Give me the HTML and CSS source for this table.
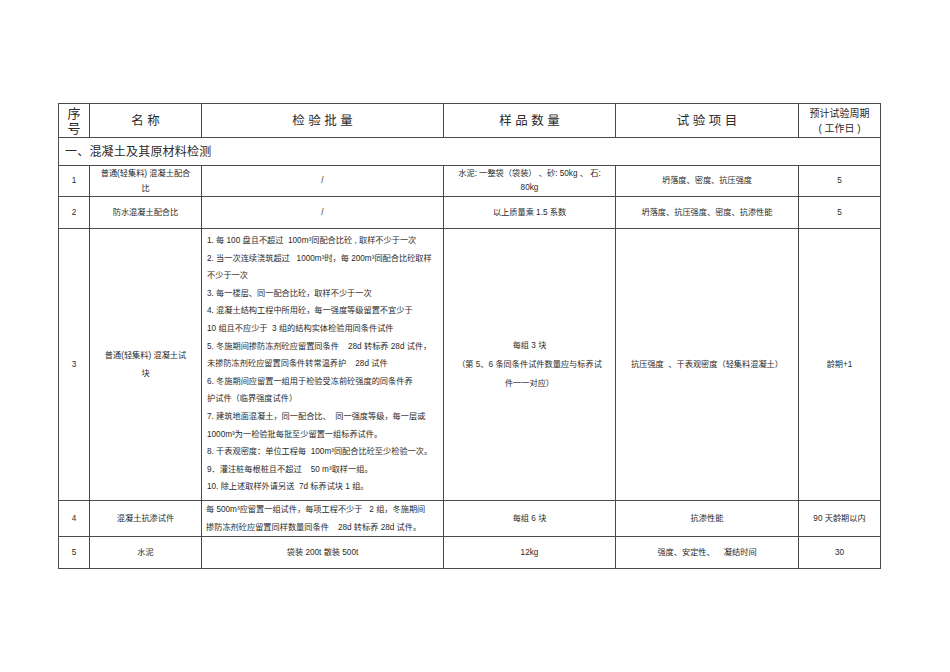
FILE: index.html
```html
<!DOCTYPE html>
<html lang="zh-CN">
<head>
<meta charset="utf-8">
<title>检验批量</title>
<link rel="stylesheet" href="styles.css">
</head>
<body>
<div class="page">
  <div class="grid">
    <div class="cell h-no"><div class="l16">序</div><div class="l16">号</div></div>
    <div class="cell h-big">名称</div>
    <div class="cell h-big">检验批量</div>
    <div class="cell h-big">样品数量</div>
    <div class="cell h-big">试验项目</div>
    <div class="cell h-small"><div class="l15">预计试验周期</div><div class="l15">( 工作日 )</div></div>

    <div class="cell sec">一、混凝土及其原材料检测</div>

    <div class="cell">1</div>
    <div class="cell"><div class="l15">普通(轻集料) 混凝土配合</div><div class="l15">比</div></div>
    <div class="cell">/</div>
    <div class="cell"><div class="l14">水泥: 一整袋（袋装） 、砂: 50kg 、 石:</div><div class="l14">80kg</div></div>
    <div class="cell">坍落度、密度、抗压强度</div>
    <div class="cell">5</div>

    <div class="cell">2</div>
    <div class="cell">防水混凝土配合比</div>
    <div class="cell">/</div>
    <div class="cell">以上质量乘 1.5 系数</div>
    <div class="cell">坍落度、抗压强度、密度、抗渗性能</div>
    <div class="cell">5</div>

    <div class="cell">3</div>
    <div class="cell"><div class="l18">普通(轻集料) 混凝土试</div><div class="l18">块</div></div>
    <div class="cell list">
      <div class="ln">1. 每 100 盘且不超过 &nbsp;100m³同配合比砼 , 取样不少于一次</div>
      <div class="ln">2. 当一次连续浇筑超过 &nbsp;&nbsp;1000m³时，每 200m³同配合比砼取样</div>
      <div class="ln">不少于一次</div>
      <div class="ln">3. 每一楼层、同一配合比砼，取样不少于一次</div>
      <div class="ln">4. 混凝土结构工程中所用砼，每一强度等级留置不宜少于</div>
      <div class="ln">10 组且不应少于 &nbsp;3 组的结构实体检验用同条件试件</div>
      <div class="ln">5. 冬施期间掺防冻剂砼应留置同条件 &nbsp;&nbsp;&nbsp;28d 转标养 28d 试件，</div>
      <div class="ln">未掺防冻剂砼应留置同条件转常温养护 &nbsp;&nbsp;&nbsp;28d 试件</div>
      <div class="ln">6. 冬施期间应留置一组用于检验受冻前砼强度的同条件养</div>
      <div class="ln">护试件（临界强度试件）</div>
      <div class="ln">7. 建筑地面混凝土，同一配合比、 &nbsp;同一强度等级，每一层或</div>
      <div class="ln">1000m³为一检验批每批至少留置一组标养试件。</div>
      <div class="ln">8. 干表观密度：单位工程每 &nbsp;100m³同配合比砼至少检验一次。</div>
      <div class="ln">9．灌注桩每根桩且不超过 &nbsp;&nbsp;&nbsp;50 m³取样一组。</div>
      <div class="ln">10. 除上述取样外请另送 &nbsp;7d 标养试块 1 组。</div>
    </div>
    <div class="cell"><div class="l19">每组 3 块</div><div class="l19">（第 5、6 条同条件试件数量应与标养试</div><div class="l19">件一一对应）</div></div>
    <div class="cell">抗压强度 &nbsp;、干表观密度（轻集料混凝土）</div>
    <div class="cell">龄期+1</div>

    <div class="cell">4</div>
    <div class="cell">混凝土抗渗试件</div>
    <div class="cell left"><div class="l18">每 500m³应留置一组试件，每项工程不少于 &nbsp;&nbsp;2 组，冬施期间</div><div class="l18">掺防冻剂砼应留置同样数量同条件 &nbsp;&nbsp;&nbsp;28d 转标养 28d 试件。</div></div>
    <div class="cell">每组 6 块</div>
    <div class="cell">抗渗性能</div>
    <div class="cell">90 天龄期以内</div>

    <div class="cell">5</div>
    <div class="cell">水泥</div>
    <div class="cell">袋装 200t 散装 500t</div>
    <div class="cell">12kg</div>
    <div class="cell">强度、安定性、 &nbsp;&nbsp;&nbsp;凝结时间</div>
    <div class="cell">30</div>
  </div>
</div>
</body>
</html>
```
FILE: styles.css
```css
html, body {
  margin: 0;
  padding: 0;
  background: #ffffff;
}
.page {
  padding: 103px 0 0 58px;
}
.grid {
  display: grid;
  grid-template-columns: 31px 112px 242px 172px 183px 82px;
  grid-template-rows: 34px 28px 31px 32px 272px 36px 32px;
  width: max-content;
  border-left: 1px solid #4a4a4a;
  border-top: 1px solid #4a4a4a;
  font-family: "Liberation Sans", "Noto Sans CJK SC", sans-serif;
  font-size: 8.2px;
  line-height: 12px;
  color: #2a2a2a;
}
.cell {
  box-sizing: border-box;
  border-right: 1px solid #4a4a4a;
  border-bottom: 1px solid #4a4a4a;
  display: flex;
  flex-direction: column;
  align-items: center;
  justify-content: center;
  text-align: center;
  white-space: nowrap;
  overflow: hidden;
  min-width: 0;
}
.l14, .l15, .l16, .l18, .l19 { white-space: nowrap; }
.l14 { height: 14px; line-height: 14px; }
.l15 { height: 15px; line-height: 15px; }
.l16 { height: 14.5px; line-height: 14.5px; }
.l18 { height: 18px; line-height: 18px; }
.l19 { height: 19px; line-height: 19px; }

.h-no {
  font-size: 13px;
  padding-top: 2px;
}
.h-big {
  font-size: 12.5px;
  letter-spacing: 3.5px;
  text-indent: 3.5px;
}
.h-small {
  font-size: 10px;
}
.sec {
  grid-column: 1 / -1;
  align-items: flex-start;
  font-size: 12px;
  padding-left: 6px;
  letter-spacing: 0.2px;
}
.left {
  align-items: flex-start;
  text-align: left;
  padding-left: 4px;
}
.list {
  align-items: flex-start;
  justify-content: flex-start;
  text-align: left;
  padding: 3px 0 0 5px;
}
.ln {
  height: 17.6px;
  line-height: 17.6px;
  white-space: nowrap;
}
```
